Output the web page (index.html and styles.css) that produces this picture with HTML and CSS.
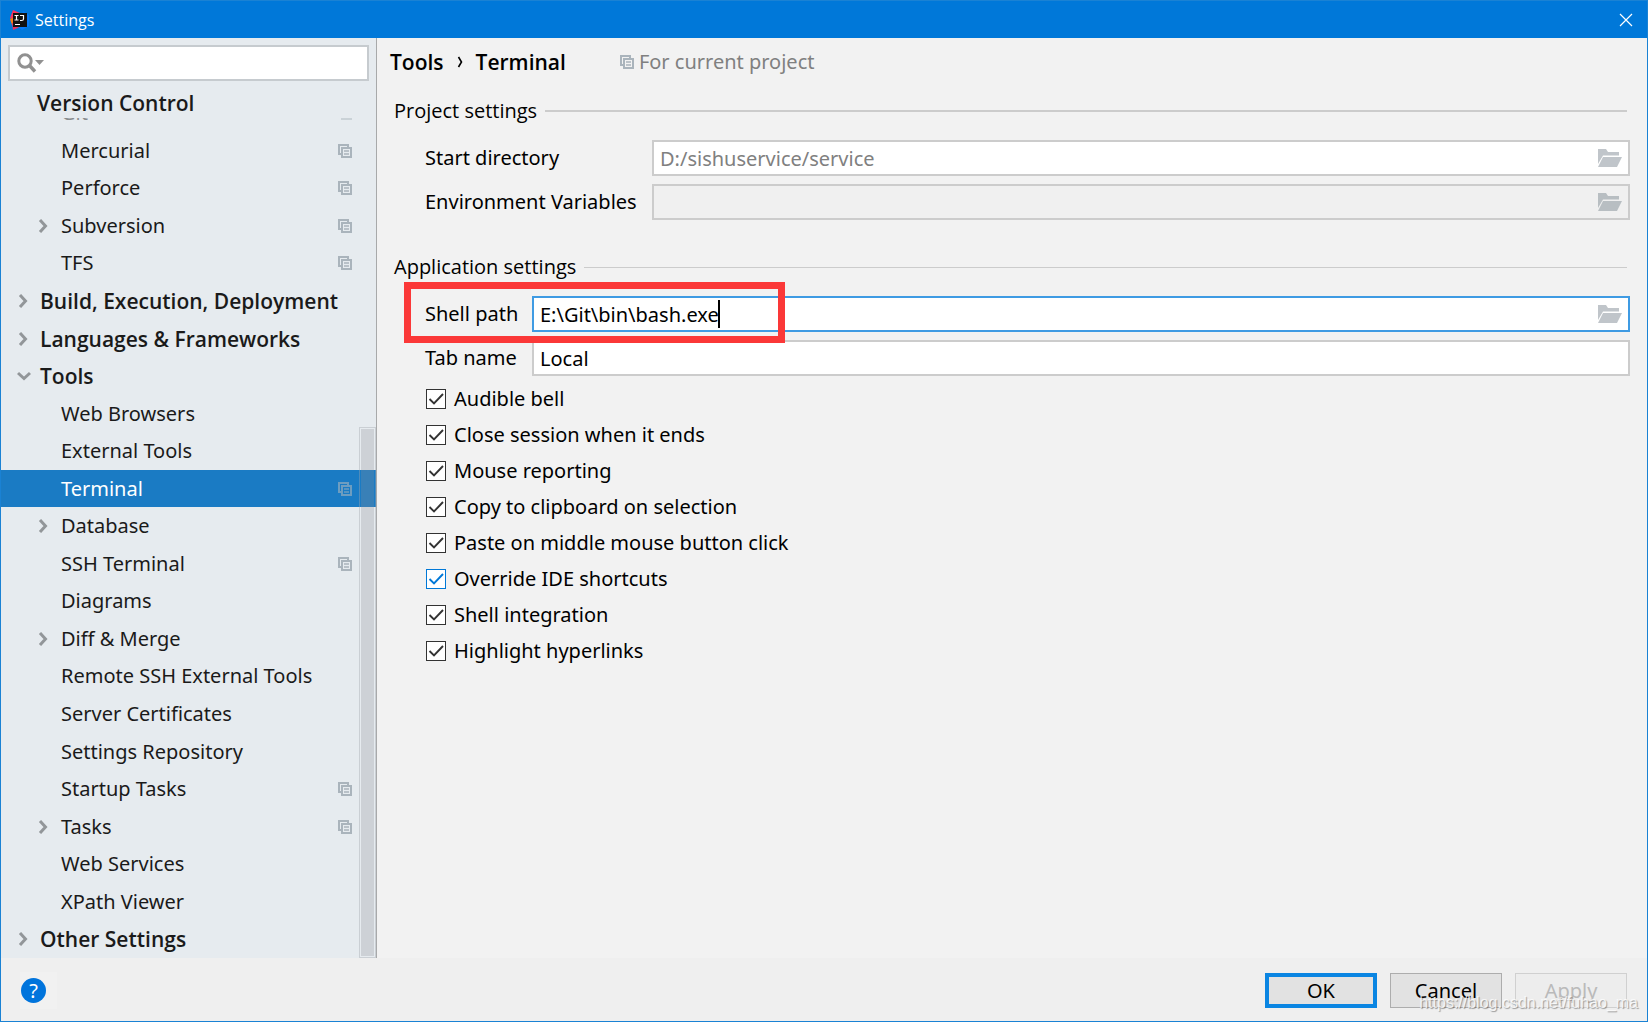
FILE: index.html
```html
<!DOCTYPE html>
<html lang="en">
<head>
<meta charset="utf-8">
<title>Settings</title>
<link rel="stylesheet" href="styles.css">
</head>
<body>
<svg class="sprite" aria-hidden="true">
  <symbol id="copy" viewBox="0 0 14 14">
    <path d="M10 3V1H1v9h2" fill="none" stroke="currentColor" stroke-width="2"/>
    <path d="M4 4h9v9H4z" fill="none" stroke="currentColor" stroke-width="2"/>
    <path d="M6 7h5M6 10h5" fill="none" stroke="currentColor" stroke-width="1.4"/>
  </symbol>
  <symbol id="right" viewBox="0 0 14 14">
    <path d="M3 1l5.500 6L3 13" fill="none" stroke="currentColor" stroke-width="3"/>
  </symbol>
  <symbol id="down" viewBox="0 0 14 14">
    <path d="M1 4l6 5.500L13 4" fill="none" stroke="currentColor" stroke-width="3"/>
  </symbol>
  <symbol id="folder" viewBox="0 0 24 18">
    <path d="M0 0h8l2 3h11v3.500H5L0 15z" fill="currentColor"/>
    <path d="M5 8h19l-5 10H0z" fill="currentColor"/>
  </symbol>
</svg>
<div class="window">
  <header class="titlebar">
    <svg class="logo" viewBox="0 0 20 20" aria-hidden="true">
      <path d="M3 0l7 3-2 9-8-4z" fill="#fe315d"/>
      <path d="M0 9l5-2 2 8-5 0z" fill="#f97a12"/>
      <path d="M2 13l6 0 2 4-7 3z" fill="#e8305f"/>
      <path d="M13 1l6 4v11l-7 4-4-3z" fill="#087cfa"/>
      <path d="M3 3h14v14H3z" fill="#111"/>
      <path d="M4.500 5.500h4M6.500 5.500v4.500M4.500 10h4M10 5.500h3.500v3.500q0 1.500-2 1.500h-1.500M5 14.500h5" fill="none" stroke="#fff" stroke-width="1.200"/>
    </svg>
    <h1 class="title">Settings</h1>
    <button class="close" type="button" aria-label="Close">
      <svg viewBox="0 0 12 12" aria-hidden="true"><path d="M0 0l12 12M12 0L0 12" stroke="#fff" stroke-width="1.200"/></svg>
    </button>
  </header>
  <div class="body">
    <aside class="sidebar">
      <div class="search">
        <svg class="lens" viewBox="0 0 28 20" aria-hidden="true">
          <circle cx="8" cy="8" r="6.200" fill="none" stroke="#919191" stroke-width="3"/>
          <path d="M12 12l6 6.500" stroke="#919191" stroke-width="3.400"/>
          <path d="M18 7h9l-4.500 5z" fill="#919191"/>
        </svg>
        <input class="search-input" type="text" aria-label="Search settings">
      </div>
      <div class="sticky">Version Control</div>
      <div class="clipped"><a class="row child" href="#git"><span class="slot"></span>Git<svg class="copy"><use href="#copy"/></svg></a></div>
      <nav class="tree" aria-label="Settings">
        <a class="row child" href="#mercurial"><span class="slot"></span>Mercurial<svg class="copy"><use href="#copy"/></svg></a>
        <a class="row child" href="#perforce"><span class="slot"></span>Perforce<svg class="copy"><use href="#copy"/></svg></a>
        <a class="row child" href="#subversion"><span class="slot"><svg class="arrow"><use href="#right"/></svg></span>Subversion<svg class="copy"><use href="#copy"/></svg></a>
        <a class="row child" href="#tfs"><span class="slot"></span>TFS<svg class="copy"><use href="#copy"/></svg></a>
        <a class="row root" href="#build"><span class="slot"><svg class="arrow"><use href="#right"/></svg></span>Build, Execution, Deployment</a>
        <a class="row root" href="#languages"><span class="slot"><svg class="arrow"><use href="#right"/></svg></span>Languages &amp; Frameworks</a>
        <a class="row root" href="#tools"><span class="slot"><svg class="arrow"><use href="#down"/></svg></span>Tools</a>
        <a class="row child" href="#browsers"><span class="slot"></span>Web Browsers</a>
        <a class="row child" href="#external"><span class="slot"></span>External Tools</a>
        <a class="row child selected" href="#terminal" aria-current="page"><span class="slot"></span>Terminal<svg class="copy"><use href="#copy"/></svg></a>
        <a class="row child" href="#database"><span class="slot"><svg class="arrow"><use href="#right"/></svg></span>Database</a>
        <a class="row child" href="#ssh"><span class="slot"></span>SSH Terminal<svg class="copy"><use href="#copy"/></svg></a>
        <a class="row child" href="#diagrams"><span class="slot"></span>Diagrams</a>
        <a class="row child" href="#diff"><span class="slot"><svg class="arrow"><use href="#right"/></svg></span>Diff &amp; Merge</a>
        <a class="row child" href="#remote"><span class="slot"></span>Remote SSH External Tools</a>
        <a class="row child" href="#certificates"><span class="slot"></span>Server Certificates</a>
        <a class="row child" href="#repository"><span class="slot"></span>Settings Repository</a>
        <a class="row child" href="#startup"><span class="slot"></span>Startup Tasks<svg class="copy"><use href="#copy"/></svg></a>
        <a class="row child" href="#tasks"><span class="slot"><svg class="arrow"><use href="#right"/></svg></span>Tasks<svg class="copy"><use href="#copy"/></svg></a>
        <a class="row child" href="#services"><span class="slot"></span>Web Services</a>
        <a class="row child" href="#xpath"><span class="slot"></span>XPath Viewer</a>
        <a class="row root" href="#other"><span class="slot"><svg class="arrow"><use href="#right"/></svg></span>Other Settings</a>
        <div class="scrollbar"></div>
      </nav>
    </aside>
    <main class="content">
      <div class="crumbs">
        <h2 class="crumb">Tools</h2>
        <svg class="crumb-sep" viewBox="0 0 6 12" aria-hidden="true"><path d="M1.500 1l3 5-3 5" fill="none" stroke="#000" stroke-width="1.600"/></svg>
        <h2 class="crumb">Terminal</h2>
        <p class="scope"><svg class="copy"><use href="#copy"/></svg>For current project</p>
      </div>
      <section class="group project">
        <h3 class="legend">Project settings</h3>
        <div class="field">
          <label for="dir">Start directory</label>
          <div class="box"><input id="dir" type="text" placeholder="D:/sishuservice/service"><button class="browse" type="button" aria-label="Browse start directory"><svg><use href="#folder"/></svg></button></div>
        </div>
        <div class="field">
          <label for="env">Environment Variables</label>
          <div class="box readonly"><input id="env" type="text" readonly><button class="browse" type="button" aria-label="Edit variables"><svg><use href="#folder"/></svg></button></div>
        </div>
      </section>
      <section class="group application">
        <h3 class="legend">Application settings</h3>
        <div class="field">
          <label for="shell">Shell path</label>
          <div class="box focused"><input id="shell" type="text" value="E:\Git\bin\bash.exe"><span class="caret"></span><button class="browse" type="button" aria-label="Browse shell path"><svg><use href="#folder"/></svg></button></div>
          <span class="marker"></span>
        </div>
        <div class="field">
          <label for="tab">Tab name</label>
          <div class="box"><input id="tab" type="text" value="Local"></div>
        </div>
        <div class="checks">
          <label class="check"><input type="checkbox" checked>Audible bell</label>
          <label class="check"><input type="checkbox" checked>Close session when it ends</label>
          <label class="check"><input type="checkbox" checked>Mouse reporting</label>
          <label class="check"><input type="checkbox" checked>Copy to clipboard on selection</label>
          <label class="check"><input type="checkbox" checked>Paste on middle mouse button click</label>
          <label class="check hover"><input type="checkbox" checked>Override IDE shortcuts</label>
          <label class="check"><input type="checkbox" checked>Shell integration</label>
          <label class="check"><input type="checkbox" checked>Highlight hyperlinks</label>
        </div>
      </section>
    </main>
  </div>
  <footer class="footer">
    <button class="help" type="button" aria-label="Help"><span class="help-disc">?</span></button>
    <button class="btn primary" type="button">OK</button>
    <button class="btn" type="button">Cancel</button>
    <button class="btn" type="button" disabled>Apply</button>
    <span class="watermark">https://blog.csdn.net/fuhao_ma</span>
  </footer>
</div>
</body>
</html>
```
FILE: styles.css
```css
* { box-sizing: border-box; }

body {
  margin: 0;
  font: 20px/28px "Noto Sans", "Open Sans", sans-serif;
  color: #000;
}

h1, h2, h3, p { margin: 0; font-size: inherit; font-weight: inherit; }
a { color: inherit; text-decoration: none; }
svg { display: block; flex: none; }
button, input { font: inherit; color: inherit; padding: 0; margin: 0; border: 0; background: none; border-radius: 0; }
input:focus { outline: none; }
.sprite { position: absolute; width: 0; height: 0; }

.window {
  display: flex;
  flex-direction: column;
  min-height: 100vh;
  border: 1px solid #1a82d4;
  background: #efefef;
}

/* Title bar */
.titlebar {
  display: flex;
  align-items: center;
  height: 37px;
  padding: 0 15px 0 9px;
  background: #0078d9;
  color: #fff;
}
.logo { width: 20px; height: 20px; }
.title { flex: 1; margin-left: 5px; font-family: "Open Sans", sans-serif; font-size: 16px; }
.close svg { width: 12px; height: 12px; overflow: visible; }

.body { display: flex; flex: 1; }

/* Sidebar */
.sidebar {
  display: flex;
  flex-direction: column;
  flex: none;
  width: 376px;
  padding-top: 7px;
  border-right: 1px solid #a8a9aa;
  background: #e6ebef;
  color: #1a1a1a;
}
.search {
  display: flex;
  align-items: center;
  height: 36px;
  margin: 0 7px;
  padding-left: 7px;
  border: 2px solid #c6cbcf;
  background: #fff;
}
.lens { width: 28px; height: 20px; }
.search-input { flex: 1; min-width: 0; margin-left: 4px; }
.sticky {
  height: 37px;
  padding: 4px 0 0 36px;
  font: 600 21px/36px "Open Sans", sans-serif;
}
.clipped {
  display: flex;
  align-items: flex-end;
  height: 14px;
  overflow: hidden;
  opacity: .45;
}
.clipped .row { flex: 1; height: 38px; }
.tree { position: relative; display: flex; flex-direction: column; flex: 1; }
.row {
  display: flex;
  align-items: center;
  padding-right: 24px;
  white-space: nowrap;
}
.tree .row { flex: 1 0 32px; }
.root { padding-left: 16px; font: 600 21px/28px "Open Sans", sans-serif; }
.child { padding-left: 36px; }
.slot { flex: none; width: 23px; color: #929699; }
.child .slot { width: 24px; }
.arrow { width: 14px; height: 14px; }
.copy { width: 14px; height: 14px; margin-left: auto; color: #aab4bc; }
.selected { background: #1a7bc4; color: #fff; }
.selected .copy { color: #6d9dc0; }
.scrollbar {
  position: absolute;
  top: 295px;
  right: 0;
  bottom: 0;
  width: 17px;
  border: 1px solid rgba(160, 166, 172, .4);
  background: rgba(140, 144, 150, .28);
  background-clip: content-box;
  padding: 1px;
}

/* Content */
.content { flex: 1; min-width: 0; padding: 10px 17px 0 13px; background: #f2f2f2; }
.crumbs { display: flex; align-items: center; height: 28px; }
.crumb { font: 600 21px/28px "Open Sans", sans-serif; }
.crumb-sep { width: 6px; height: 12px; margin: 0 13px; }
.scope { display: flex; align-items: center; gap: 5px; margin-left: 54px; color: #808080; }
.legend {
  display: flex;
  align-items: center;
  gap: 8px;
  padding-right: 3px;
  font-family: "Open Sans", sans-serif;
}
.legend::after { content: ""; flex: 1; height: 2px; background: #ccc; }
.application .legend::after { height: 1px; }
.group { padding-left: 4px; }
.project { margin-top: 21px; }
.application { margin-top: 33px; }
.field { position: relative; display: flex; align-items: center; margin: 8px 0 0 31px; }
.legend + .field { margin-top: 15px; }
.field label { flex: none; }
.project .field label { width: 227px; }
.application .field label { width: 107px; }
.box {
  position: relative;
  display: flex;
  align-items: center;
  flex: 1;
  min-width: 0;
  height: 36px;
  padding: 0 6px;
  border: 2px solid #ccc;
  background: #fff;
}
.box input { flex: 1; min-width: 0; height: 30px; }
.box input::placeholder { color: #808080; opacity: 1; }
.readonly { background: #f0f0f0; }
.focused { border-color: #3f9be3; }
.browse svg { width: 24px; height: 18px; color: #c0c5ca; }
.readonly svg { color: #b8bec2; }
.caret { position: absolute; left: 184px; top: 2px; width: 2px; height: 28px; background: #000; }
.marker {
  position: absolute;
  top: -14px;
  left: -21px;
  width: 381px;
  height: 61px;
  border: 7px solid #fb3838;
  pointer-events: none;
  z-index: 1;
}

.checks { display: flex; flex-direction: column; align-items: flex-start; margin: 5px 0 0 32px; }
.check { display: flex; align-items: center; gap: 8px; height: 36px; color: #000; }
.check input {
  appearance: none;
  width: 20px;
  height: 20px;
  border: 1px solid #333;
  background: #fff url("data:image/svg+xml,%3Csvg xmlns='http://www.w3.org/2000/svg' viewBox='0 0 18 18'%3E%3Cpath d='M2.500 9l4.500 4.500L16 4' fill='none' stroke='%23333' stroke-width='1.900'/%3E%3C/svg%3E") center / 18px 18px no-repeat;
}
.hover input {
  border-color: #0078d7;
  background-image: url("data:image/svg+xml,%3Csvg xmlns='http://www.w3.org/2000/svg' viewBox='0 0 18 18'%3E%3Cpath d='M2.500 9l4.500 4.500L16 4' fill='none' stroke='%230078d7' stroke-width='1.900'/%3E%3C/svg%3E");
}

/* Footer */
.footer {
  position: relative;
  display: flex;
  align-items: center;
  gap: 13px;
  height: 63px;
  padding: 2px 20px 0 19px;
}
.help {
  display: flex;
  align-items: center;
  width: 37px;
  height: 37px;
  margin-right: auto;
  padding-left: 1px;
  background: #f1f1f1;
}
.help-disc {
  width: 25px;
  height: 25px;
  border-radius: 50%;
  background: #0074dc;
  color: #fff;
  line-height: 25px;
  text-align: center;
}
.btn {
  width: 112px;
  height: 35px;
  border: 1px solid #adadad;
  background: #e2e2e2;
  line-height: 24px;
}
.primary { border: 4px solid #0a85e2; }
.btn:disabled { border-color: #d0d0d0; background: #ededed; color: #bababa; }
.watermark {
  position: absolute;
  right: 9px;
  bottom: 4px;
  font: 16px/28px "Liberation Sans", sans-serif;
  color: rgba(255, 255, 255, .8);
  text-shadow: 1px 1px 1px rgba(0, 0, 0, .35);
}
```
